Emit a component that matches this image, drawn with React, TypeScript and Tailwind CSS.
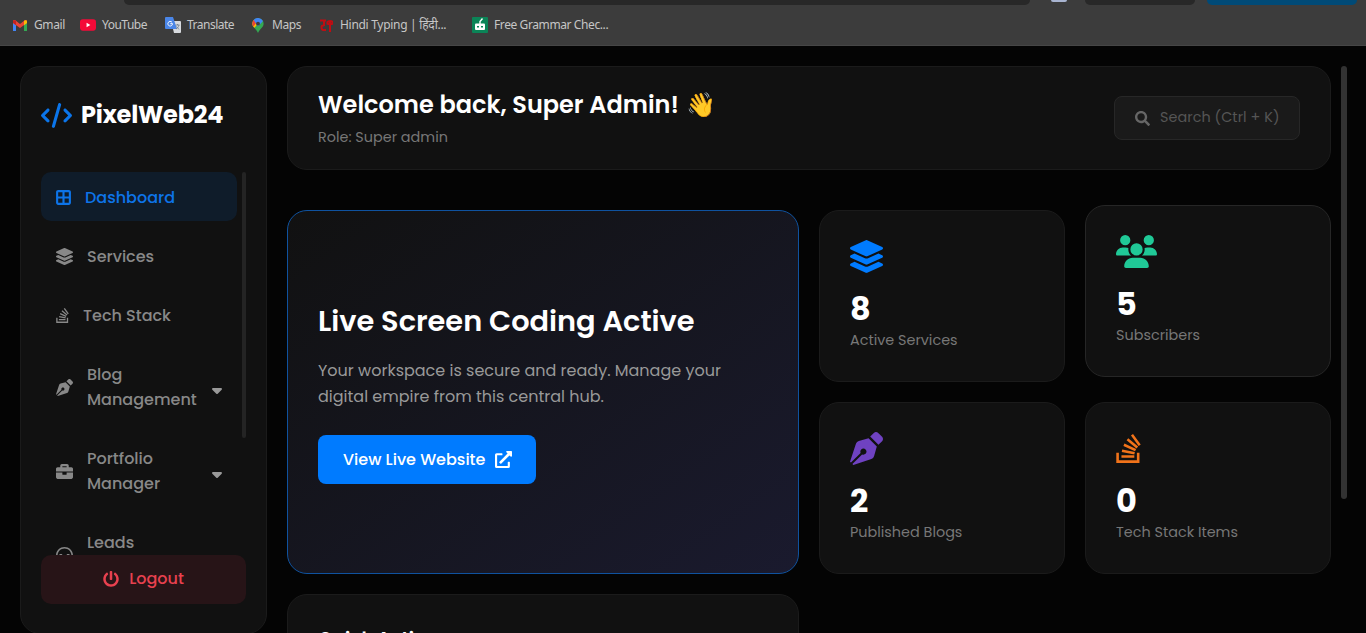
import type { ReactNode } from "react"
import type { IconType } from "react-icons"
import {
  FaBriefcase,
  FaExternalLinkAlt,
  FaLayerGroup,
  FaPenNib,
  FaPowerOff,
  FaSearch,
} from "react-icons/fa"
import { FaBorderAll, FaCaretDown, FaCode, FaHeadset, FaStackOverflow, FaUsers } from "react-icons/fa6"

type NavItem = {
  label: string
  icon: IconType
  iconClass: string
  active?: boolean
  caret?: boolean
  tall?: boolean
}

const NAV: NavItem[] = [
  { label: "Dashboard", icon: FaBorderAll, iconClass: "w-[15px]", active: true },
  { label: "Services", icon: FaLayerGroup, iconClass: "w-[17px]" },
  { label: "Tech Stack", icon: FaStackOverflow, iconClass: "w-[13px]" },
  { label: "Blog Management", icon: FaPenNib, iconClass: "w-[17px]", caret: true, tall: true },
  { label: "Portfolio Manager", icon: FaBriefcase, iconClass: "w-[17px]", caret: true, tall: true },
  { label: "Leads", icon: FaHeadset, iconClass: "w-[17px]", tall: true },
]

const STATS = [
  { value: "8", label: "Active Services", icon: FaLayerGroup, iconClass: "w-[33px] text-[#007bff]", cardClass: "border-[#1b1b1b]" },
  { value: "5", label: "Subscribers", icon: FaUsers, iconClass: "w-[41px] text-[#20c997]", cardClass: "border-[#262626] -translate-y-[5px]" },
  { value: "2", label: "Published Blogs", icon: FaPenNib, iconClass: "w-[33px] text-[#6f42c1]", cardClass: "border-[#1b1b1b]" },
  { value: "0", label: "Tech Stack Items", icon: FaStackOverflow, iconClass: "w-[25px] text-[#f1731a]", cardClass: "border-[#1b1b1b]" },
]

function GmailIcon() {
  return (
    <svg viewBox="0 0 14 11" className="h-[11px] w-[14px]">
      <path d="M0 1.5V11h3V4.5z" fill="#4285f4" />
      <path d="M14 1.5V11h-3V4.5z" fill="#34a853" />
      <path d="M0 1.4C0 .2 1.6-.4 2.6.5L7 4 11.400.5C12.400-.4 14 .2 14 1.400V3L7 8 0 3z" fill="#ea4335" />
      <path d="M11 .8C12.300-.4 14 .2 14 1.400V3l-3 2.200z" fill="#fbbc04" />
      <path d="M0 1.400C0 .2 1.600-.4 3 .8v4.400L0 3z" fill="#c5221f" />
    </svg>
  )
}

function YouTubeIcon() {
  return (
    <svg viewBox="0 0 17 12" className="h-3 w-4">
      <rect width="17" height="12" rx="3" fill="#f40a38" />
      <path d="M7 3.500v5L11 6z" fill="#fff" />
    </svg>
  )
}

function TranslateIcon() {
  return (
    <svg viewBox="0 0 16 16" className="size-4">
      <path d="M6 4h9a1 1 0 0 1 1 1v10a1 1 0 0 1-1 1H9z" fill="#d7dade" />
      <path d="M1 0h7l4 12H1a1 1 0 0 1-1-1V1a1 1 0 0 1 1-1z" fill="#4a86e8" />
      <path d="M7 5.300a2.300 2.300 0 1 0 .5 1.400H5.300" fill="none" stroke="#fff" strokeWidth="1" />
      <path d="M10.500 8h4M12.500 7v1M14 8c-.5 2-1.500 3-3 4M11.500 9.500l2.500 3" fill="none" stroke="#6b7b8c" strokeWidth=".8" />
    </svg>
  )
}

function MapsIcon() {
  return (
    <svg viewBox="0 0 12 16" className="h-[15px] w-[12px]">
      <path d="M6 0a6 6 0 0 1 6 6c0 4-4.500 5.500-6 10C4.500 11.500 0 10 0 6a6 6 0 0 1 6-6z" fill="#34a853" />
      <path d="M0 6a6 6 0 0 1 1.400-3.900L6 6 2.200 10.400C.9 9 0 8 0 6z" fill="#fbbc04" />
      <path d="M1.400 2.100 4.500 4.800 1 9C.3 8 0 7 0 6c0-1.500.5-2.900 1.400-3.900z" fill="#ea4335" />
      <path d="M1.400 2.100A6 6 0 0 1 11.300 3.200L6 9z" fill="#4285f4" />
      <circle cx="6" cy="6" r="2.100" fill="#3c3c3c" />
    </svg>
  )
}

function HindiIcon() {
  return (
    <svg viewBox="0 0 13 13" className="size-[13px]" fill="none" stroke="#c00d12" strokeWidth="2">
      <path d="M0 1.500h6M4 2v5M4 6.500H3c-2 0-2 4 0 4.500h3M7.500 5.500V3c1-1.500 4-1.500 5 0v2.500M10 2v11M7.500 5h5" />
    </svg>
  )
}

function GrammarIcon() {
  return (
    <svg viewBox="0 0 16 16" className="size-4">
      <rect width="16" height="16" rx="1" fill="#0b8457" />
      <rect x="3" y="6.500" width="10" height="6.500" rx="1" fill="#fff" />
      <path d="M8 7V4.500L10.500 1.500" stroke="#fff" strokeWidth="1.400" fill="none" />
      <path d="M5 9h2v1.500H5zM9 9h2v1.500H9z" fill="#0b8457" />
    </svg>
  )
}

function Bookmark({ icon, className, children }: { icon: ReactNode; className: string; children: ReactNode }) {
  return (
    <div className={`flex shrink-0 items-center whitespace-nowrap ${className}`}>
      {icon}
      <span>{children}</span>
    </div>
  )
}

function BrowserBar() {
  return (
    <div className="h-[46px] shrink-0 overflow-hidden border-b border-[#464646] bg-[#3c3c3c] font-['Noto_Sans',sans-serif] text-[12px] tracking-[-0.4px] text-[#c6c6c6]">
      <div className="flex h-[5px] items-start pl-[124px]">
        <div className="h-[5px] w-[906px] rounded-b-[14px] bg-[#282828]" />
        <div className="ml-[21px] h-[2px] w-[16px] rounded-b bg-[#a8b4d0]" />
        <div className="ml-[18px] h-[5px] w-[110px] rounded-b-[12px] bg-[#282828]" />
        <div className="ml-[12px] h-[5px] w-[150px] rounded-b-[12px] bg-[#004a77]" />
      </div>
      <div className="flex h-10 items-center pl-[13px]">
        <Bookmark icon={<GmailIcon />} className="w-[67px] gap-[7px]">Gmail</Bookmark>
        <Bookmark icon={<YouTubeIcon />} className="w-[85px] gap-[6px] tracking-[-0.5px]">YouTube</Bookmark>
        <Bookmark icon={<TranslateIcon />} className="w-[87px] gap-[6px] tracking-[-0.5px]">Translate</Bookmark>
        <Bookmark icon={<MapsIcon />} className="w-[68px] gap-[8px]">Maps</Bookmark>
        <Bookmark icon={<HindiIcon />} className="w-[152px] gap-[7px] tracking-[-0.3px]">Hindi Typing | हिंदी...</Bookmark>
        <Bookmark icon={<GrammarIcon />} className="w-[150px] gap-[6px]">Free Grammar Chec...</Bookmark>
      </div>
    </div>
  )
}

function Sidebar() {
  return (
    <aside className="flex h-[568px] w-[247px] shrink-0 flex-col rounded-[20px] border border-[#1b1b1b] bg-[#111111] px-5 pb-[29px]">
      <div className="flex h-[105px] shrink-0 items-center gap-[9px] pb-[9px]">
        <FaCode className="size-[31px] text-[#0b75ea]" />
        <span className="text-[24px] font-bold tracking-[-0.2px] text-white">PixelWeb24</span>
      </div>
      <div className="flex h-[383px] shrink-0 justify-between overflow-hidden">
        <nav className="flex w-[196px] flex-col gap-[10px]">
          {NAV.map(({ label, icon: Icon, iconClass, active, caret, tall }) => (
            <a
              key={label}
              className={`flex shrink-0 items-center rounded-[10px] pt-[13px] pr-3 pb-[11px] pl-[14.5px] text-[16px] leading-[25px] font-medium ${
                active ? "bg-[#0f1c2a] text-[#0d74e8]" : "text-[#888888]"
              }`}
            >
              <Icon className={`h-[17px] shrink-0 ${iconClass}`} />
              <span className={`ml-[14.5px] w-[112px] shrink-0 ${tall ? "h-[50px]" : ""}`}>{label}</span>
              {caret && <FaCaretDown className="mt-1.5 ml-[10px] size-4 shrink-0 text-[#999999]" />}
            </a>
          ))}
        </nav>
        <div className="h-[266px] w-1 rounded-full bg-[#242424]" />
      </div>
      <button className="flex h-[49px] w-[205px] shrink-0 items-center justify-center gap-[10px] rounded-[10px] bg-[#271417] pb-px text-[16px] font-medium text-[#e8414f]">
        <FaPowerOff className="size-4" />
        Logout
      </button>
    </aside>
  )
}

function Header() {
  return (
    <header className="flex h-[104px] shrink-0 items-center justify-between rounded-[20px] border border-[#1b1b1b] bg-[#111111] px-[30px]">
      <div className="pt-[1.5px]">
        <h1 className="text-[24px] leading-8 font-semibold text-white">
          Welcome back, Super Admin! <span className="ml-px font-normal">👋</span>
        </h1>
        <p className="mt-1 text-[14.4px] leading-6 text-[#777777]">Role: Super admin</p>
      </div>
      <button className="flex h-11 w-[186px] items-center gap-[10px] rounded-lg border border-[#272727] bg-[#1a1a1a] pl-5 text-[14.4px] tracking-[0.05px] text-[#555555]">
        <FaSearch className="size-[15px] text-[#666666]" />
        Search (Ctrl + K)
      </button>
    </header>
  )
}

function Hero() {
  return (
    <section className="row-span-2 flex flex-col items-start rounded-[20px] border border-[#0f529f] bg-gradient-to-br from-[#111111] to-[#1a1a2e] px-[30px] pt-[90px]">
      <h2 className="text-[28.8px] leading-10 font-semibold text-white">Live Screen Coding Active</h2>
      <p className="mt-[17px] w-[440px] text-[16px] leading-[26px] text-[#999999]">
        Your workspace is secure and ready. Manage your
        <br />
        digital empire from this central hub.
      </p>
      <a className="mt-[25px] flex h-[49px] w-[218px] items-center gap-[10px] rounded-lg bg-[#007bff] pl-[25px] text-[16px] font-medium text-white">
        View Live Website
        <FaExternalLinkAlt className="size-[17px]" />
      </a>
    </section>
  )
}

export default function App() {
  return (
    <div className="flex h-[633px] w-[1366px] flex-col overflow-hidden bg-[#040404] font-['Poppins','Inter',sans-serif]">
      <BrowserBar />
      <div className="flex min-h-0 flex-1 items-start pt-5 pl-5">
        <Sidebar />
        <main className="ml-5 flex w-[1044px] shrink-0 flex-col gap-10">
          <Header />
          <div className="grid shrink-0 grid-cols-[512px_246px_246px] grid-rows-[172px_172px_172px] gap-5">
            <Hero />
            {STATS.map(({ value, label, icon: Icon, iconClass, cardClass }) => (
              <div key={label} className={`flex flex-col rounded-[20px] border bg-[#111111] px-[30px] pt-[29px] ${cardClass}`}>
                <Icon className={`h-[33px] shrink-0 ${iconClass}`} />
                <span className="mt-4 text-[32px] leading-[39px] font-bold text-white">{value}</span>
                <span className="text-[14.4px] leading-6 text-[#777777]">{label}</span>
              </div>
            ))}
            <section className="rounded-[20px] border border-[#1b1b1b] bg-[#111111] px-[30px] pt-[31px]">
              <h3 className="text-[18.72px] leading-7 font-semibold text-white">Quick Actions</h3>
            </section>
          </div>
        </main>
        <div className="ml-[10px] h-[433px] w-[6px] rounded-full bg-[#323232]" />
      </div>
    </div>
  )
}
